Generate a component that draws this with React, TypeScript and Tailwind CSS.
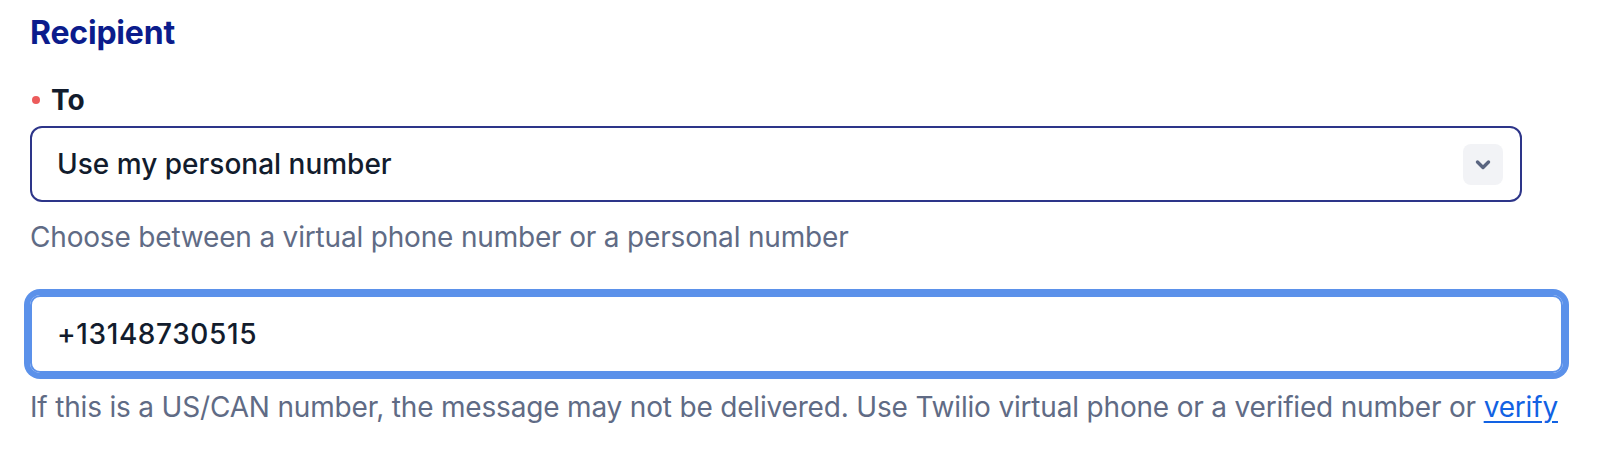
export default function App() {
  return (
    <div className="min-h-[466px] w-full bg-white pl-[30px] pr-[37px] pt-[13px] font-['Inter','Liberation_Sans',sans-serif]">
      <h2 className="text-[32px] font-bold leading-[40px] tracking-[-0.2px] text-[#0b1c8c]">Recipient</h2>

      <div className="mt-[29px] flex items-center gap-[11px] pl-[2px]">
        <span className="h-[8px] w-[8px] rounded-full bg-[#ec5b5b]" />
        <span className="text-[28px] font-bold leading-[36px] text-[#121c2d]">To</span>
      </div>

      <button
        type="button"
        className="mt-[8px] flex h-[76px] w-[1492px] items-center justify-between rounded-[12px] border-2 border-[#2d3589] bg-white pl-[25px] pr-[17px] text-left"
      >
        <span className="text-[28px] font-medium leading-[36px] text-[#121c2d]">Use my personal number</span>
        <span className="flex h-[41px] w-[40px] items-center justify-center rounded-[8px] bg-[#f2f3f6]">
          <svg width="16" height="11" viewBox="0 0 16 11" fill="none">
            <path d="M2.5 3 8 8.5 13.5 3" stroke="#5a6580" strokeWidth="3.4" strokeLinecap="round" strokeLinejoin="round" />
          </svg>
        </span>
      </button>

      <p className="mt-[17px] text-[28px] leading-[36px] tracking-[-0.18px] text-[#606b85]">
        Choose between a virtual phone number or a personal number
      </p>

      <div className="mt-[40px] flex h-[78px] w-full items-center rounded-[10px] border-2 border-[#5b91ea] pl-[25px] shadow-[0_0_0_6px_#5b91ea]">
        <span className="text-[28px] font-medium leading-[36px] tracking-[0.6px] text-[#121c2d]">+13148730515</span>
      </div>

      <p className="mt-[16px] whitespace-nowrap text-[28px] leading-[36px] tracking-[-0.18px] text-[#606b85]">
        If this is a US/CAN number, the message may not be delivered. Use Twilio virtual phone or a verified number or{" "}
        <a href="#" className="text-[#1262e3] underline decoration-2 underline-offset-[4px]">
          verify
        </a>
      </p>
    </div>
  );
}
